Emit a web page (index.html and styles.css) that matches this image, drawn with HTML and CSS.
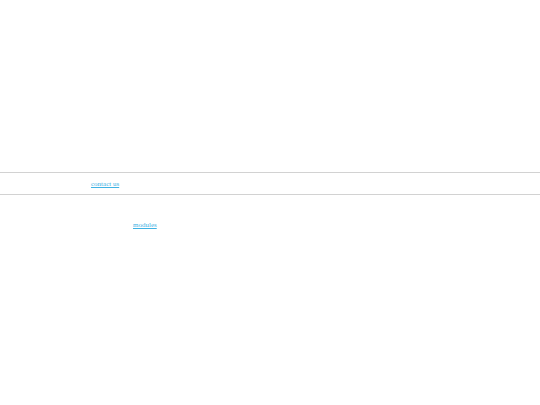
FILE: index.html
```html
<!DOCTYPE html>
<html>
<head>
<meta charset="utf-8">
<link rel="stylesheet" href="styles.css">
</head>
<body>
<div class="top"></div>
<nav class="nav"><a class="link" href="#">contact us</a></nav>
<main class="content"><a class="link" href="#">modules</a></main>
</body>
</html>
```
FILE: styles.css
```css
html, body { margin: 0; padding: 0; background: #fff; }
body { font-family: "Liberation Serif", serif; font-size: 7px; }
.top { height: 172px; }
.nav {
  border-top: 1px solid #d2d2d2;
  border-bottom: 1px solid #d2d2d2;
  height: 21px;
  display: flex;
  align-items: center;
  padding-left: 91px;
}
.content { padding-left: 133px; padding-top: 26px; }
.link { color: #3fb2e4; text-decoration: underline; }
```
